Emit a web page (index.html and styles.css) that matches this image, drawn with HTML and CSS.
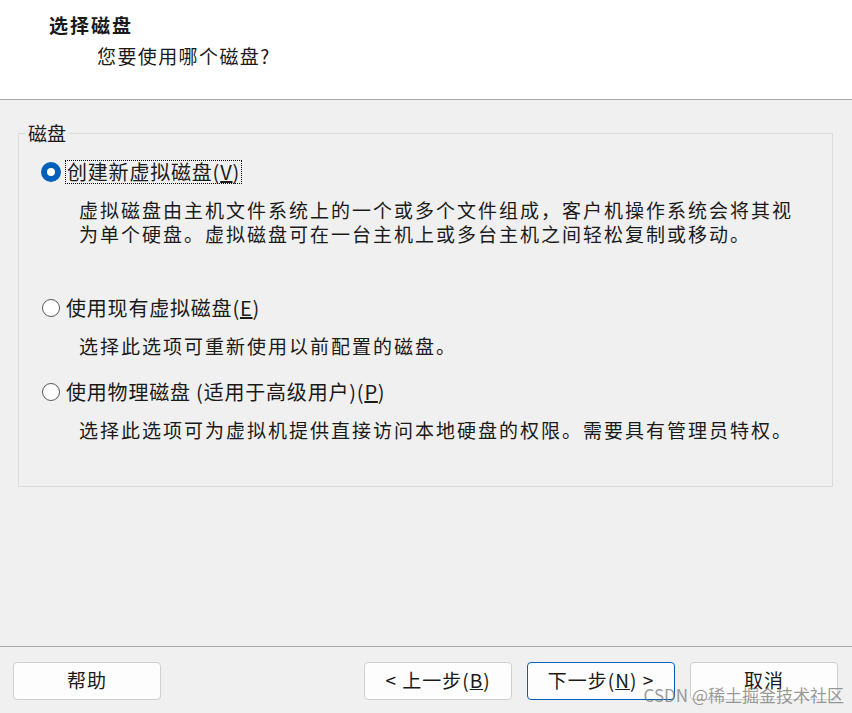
FILE: index.html
```html
<!DOCTYPE html>
<html lang="zh-CN">
<head>
    <meta charset="UTF-8">
    <title>新建虚拟机向导</title>
    <link rel="stylesheet" href="styles.css">
</head>
<body>
    <div class="wizard">
        <header class="wizard-head">
            <h1>选择磁盘</h1>
            <p>您要使用哪个磁盘?</p>
        </header>

        <div class="wizard-body">
            <fieldset class="group">
                <legend>磁盘</legend>

                <div class="option first">
                    <label class="option-row">
                        <span class="radio checked"></span>
                        <span class="option-label focused">创建新虚拟磁盘(<u>V</u>)</span>
                    </label>
                    <p class="option-desc">虚拟磁盘由主机文件系统上的一个或多个文件组成，客户机操作系统会将其视<br>为单个硬盘。虚拟磁盘可在一台主机上或多台主机之间轻松复制或移动。</p>
                </div>

                <div class="option second">
                    <label class="option-row">
                        <span class="radio"></span>
                        <span class="option-label">使用现有虚拟磁盘(<u>E</u>)</span>
                    </label>
                    <p class="option-desc">选择此选项可重新使用以前配置的磁盘。</p>
                </div>

                <div class="option">
                    <label class="option-row">
                        <span class="radio"></span>
                        <span class="option-label">使用物理磁盘 (适用于高级用户)(<u>P</u>)</span>
                    </label>
                    <p class="option-desc">选择此选项可为虚拟机提供直接访问本地硬盘的权限。需要具有管理员特权。</p>
                </div>
            </fieldset>
        </div>

        <footer class="wizard-foot">
            <button class="btn">帮助</button>
            <div class="nav-buttons">
                <button class="btn">&lt; 上一步(<u>B</u>)</button>
                <button class="btn default">下一步(<u>N</u>) &gt;</button>
                <button class="btn">取消</button>
            </div>
            <span class="watermark">CSDN @稀土掘金技术社区</span>
        </footer>
    </div>
</body>
</html>
```

FILE: styles.css
```css
body {
    margin: 0;
    padding: 0;
    background-color: #f0f0f0;
    font-family: "Noto Sans CJK SC", "Liberation Sans", sans-serif;
    color: #1a1a1a;
}
.wizard {
    width: 852px;
    height: 713px;
    display: flex;
    flex-direction: column;
    position: relative;
    overflow: hidden;
}
.wizard-head {
    background-color: #fff;
    height: 100px;
    border-bottom: 1px solid #a9a9a9;
    padding: 12px 0 0 49px;
    box-sizing: border-box;
    flex-shrink: 0;
}
.wizard-head h1 {
    margin: 0;
    font-size: 19px;
    line-height: 26px;
    font-weight: bold;
    letter-spacing: 2px;
}
.wizard-head p {
    margin: 5px 0 0 48px;
    font-size: 19px;
    line-height: 26px;
    letter-spacing: 1.4px;
}
.wizard-body {
    flex: 1;
    padding: 20px 19px 0 18px;
}
.group {
    margin: 0;
    padding: 0 0 0 23px;
    height: 365px;
    border: 1px solid #dcdcdc;
}
.group legend {
    margin-left: -16px;
    padding: 0 2px;
    font-size: 19px;
    line-height: 26px;
}
.option {
    margin-top: 14px;
}
.option.first {
    margin-bottom: 50px;
}
.option.second {
    margin-bottom: 22px;
}
.option-row {
    display: flex;
    align-items: center;
    gap: 4px;
    height: 24px;
}
.radio {
    width: 18px;
    height: 18px;
    border: 1px solid #5a5a5a;
    border-radius: 50%;
    box-sizing: border-box;
    background-color: #fff;
    flex-shrink: 0;
}
.radio.checked {
    width: 20px;
    height: 20px;
    border: 6px solid #005fb8;
    margin-left: -1px;
}
.option-label {
    font-size: 20px;
    line-height: 22px;
    letter-spacing: 0.8px;
    padding: 0 1px;
    border: 1px solid transparent;
}
.option-label.focused {
    border: 1px dotted #000;
}
.option-desc {
    margin: 14px 0 0 37px;
    font-size: 19px;
    line-height: 24px;
    letter-spacing: 2px;
}
.wizard-foot {
    height: 67px;
    border-top: 1px solid #a9a9a9;
    display: flex;
    align-items: flex-start;
    justify-content: space-between;
    padding: 15px 14px 0 13px;
    box-sizing: border-box;
    flex-shrink: 0;
}
.nav-buttons {
    display: flex;
    gap: 15px;
}
.btn {
    width: 148px;
    height: 38px;
    background-color: #fdfdfd;
    border: 1px solid #d0d0d0;
    border-radius: 4px;
    font-family: "Noto Sans CJK SC", "Liberation Sans", sans-serif;
    font-size: 19px;
    color: #1a1a1a;
    padding: 0 0 3px;
    letter-spacing: 1px;
}
.btn.default {
    border-color: #005fb8;
}
.watermark {
    position: absolute;
    right: 8px;
    bottom: 6px;
    font-size: 17px;
    color: rgba(120, 120, 120, 0.75);
}
```
